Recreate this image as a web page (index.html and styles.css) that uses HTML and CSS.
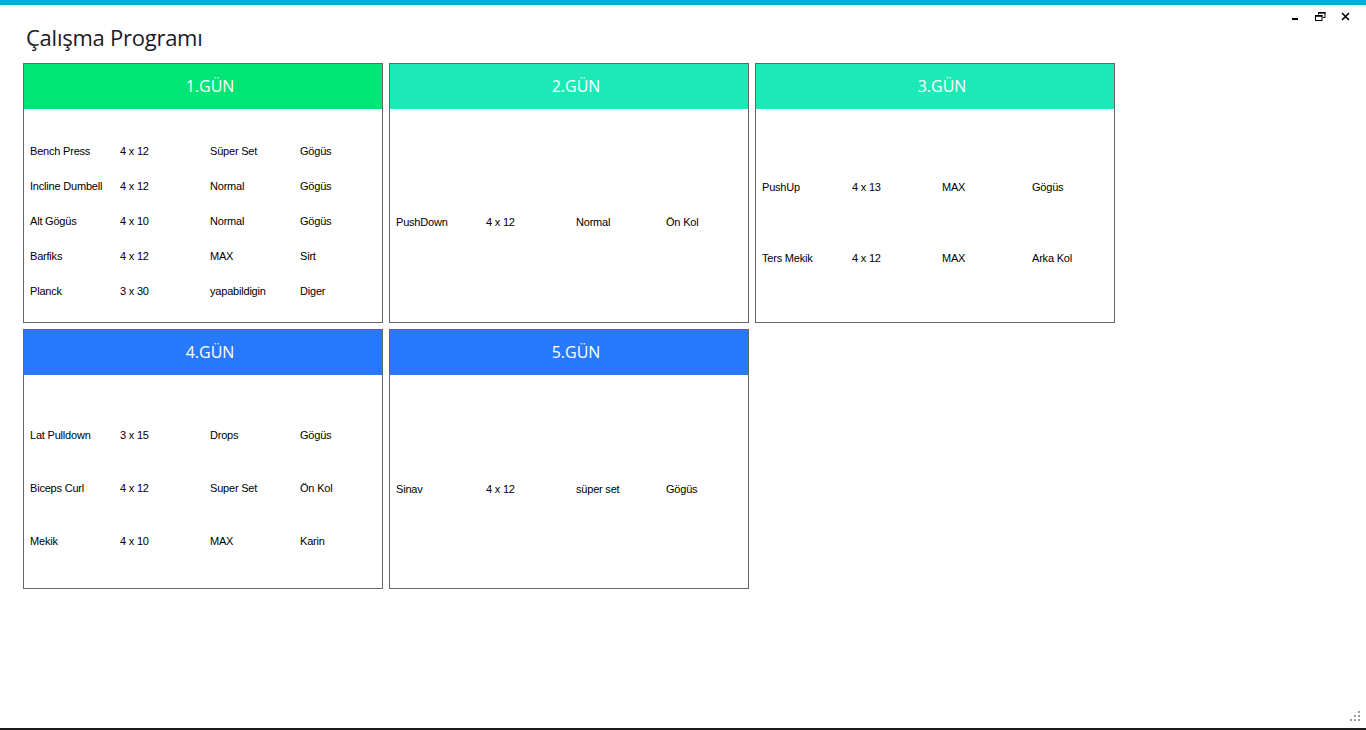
FILE: index.html
```html
<!DOCTYPE html>
<html lang="tr">
<head>
<meta charset="utf-8">
<title>Çalışma Programı</title>
<link rel="stylesheet" href="styles.css">
</head>
<body>
<div class="topbar"></div>
<header class="titlebar">
  <h1 class="title">Çalışma Programı</h1>
  <div class="controls">
    <svg width="60" height="10" viewBox="0 0 60 10">
      <rect x="0" y="6" width="6" height="2" fill="#000"/>
      <path d="M26.5 2.5V0.5h6.5v5h-2" fill="none" stroke="#000" stroke-width="1"/>
      <rect x="26" y="0" width="7.5" height="1.6" fill="#000"/>
      <rect x="23.5" y="3.5" width="6.5" height="5" fill="#fff" stroke="#000" stroke-width="1"/>
      <rect x="23" y="3" width="7.5" height="1.8" fill="#000"/>
      <path d="M50 1L57 8M57 1L50 8" stroke="#000" stroke-width="1.6"/>
    </svg>
  </div>
</header>
<main class="grid">
  <section class="card">
    <div class="card-head head-green">1.GÜN</div>
    <div class="card-body rows-35 body-up">
      <div class="row"><span>Bench Press</span><span>4 x 12</span><span>Süper Set</span><span>Gögüs</span></div>
      <div class="row"><span>Incline Dumbell</span><span>4 x 12</span><span>Normal</span><span>Gögüs</span></div>
      <div class="row"><span>Alt Gögüs</span><span>4 x 10</span><span>Normal</span><span>Gögüs</span></div>
      <div class="row"><span>Barfiks</span><span>4 x 12</span><span>MAX</span><span>Sirt</span></div>
      <div class="row"><span>Planck</span><span>3 x 30</span><span>yapabildigin</span><span>Diger</span></div>
    </div>
  </section>
  <section class="card">
    <div class="card-head head-teal">2.GÜN</div>
    <div class="card-body rows-35">
      <div class="row"><span>PushDown</span><span>4 x 12</span><span>Normal</span><span>Ön Kol</span></div>
    </div>
  </section>
  <section class="card">
    <div class="card-head head-teal">3.GÜN</div>
    <div class="card-body rows-71 body-down">
      <div class="row"><span>PushUp</span><span>4 x 13</span><span>MAX</span><span>Gögüs</span></div>
      <div class="row"><span>Ters Mekik</span><span>4 x 12</span><span>MAX</span><span>Arka Kol</span></div>
    </div>
  </section>
  <section class="card">
    <div class="card-head head-blue">4.GÜN</div>
    <div class="card-body rows-53">
      <div class="row"><span>Lat Pulldown</span><span>3 x 15</span><span>Drops</span><span>Gögüs</span></div>
      <div class="row"><span>Biceps Curl</span><span>4 x 12</span><span>Super Set</span><span>Ön Kol</span></div>
      <div class="row"><span>Mekik</span><span>4 x 10</span><span>MAX</span><span>Karin</span></div>
    </div>
  </section>
  <section class="card">
    <div class="card-head head-blue">5.GÜN</div>
    <div class="card-body rows-35 body-down">
      <div class="row"><span>Sinav</span><span>4 x 12</span><span>süper set</span><span>Gögüs</span></div>
    </div>
  </section>
</main>
<div class="spacer"></div>
<div class="bottombar"></div>
<svg class="grip" width="12" height="12" viewBox="0 0 12 12">
  <rect x="8" y="0" width="2" height="2" fill="#9a9a9a"/>
  <rect x="4" y="4" width="2" height="2" fill="#9a9a9a"/>
  <rect x="8" y="4" width="2" height="2" fill="#9a9a9a"/>
  <rect x="0" y="8" width="2" height="2" fill="#9a9a9a"/>
  <rect x="4" y="8" width="2" height="2" fill="#9a9a9a"/>
  <rect x="8" y="8" width="2" height="2" fill="#9a9a9a"/>
</svg>
</body>
</html>
```
FILE: styles.css
```css
* { box-sizing: border-box; }
html, body { margin: 0; padding: 0; }
body {
  height: 730px;
  display: flex;
  flex-direction: column;
  background: #fff;
  font-family: "Liberation Sans", Arial, sans-serif;
  color: #000;
  position: relative;
  overflow: hidden;
}
.topbar { height: 5px; background: #00acd9; flex: none; }
.titlebar {
  height: 58px;
  display: flex;
  justify-content: space-between;
  align-items: flex-start;
  flex: none;
}
.title {
  margin: 17px 0 0 26px;
  font-family: "Open Sans", "Noto Sans", sans-serif;
  font-weight: 400;
  font-size: 22px;
  line-height: 30px;
  color: #1a1a2a;
  letter-spacing: -0.25px;
}
.controls { margin: 7px 14px 0 0; display: flex; }
.controls svg { display: block; }
.grid {
  display: grid;
  grid-template-columns: repeat(3, 360px);
  grid-auto-rows: 260px;
  gap: 6px;
  padding-left: 23px;
  flex: none;
}
.card {
  border: 1px solid #666;
  display: flex;
  flex-direction: column;
  background: #fff;
}
.card-head {
  height: 45px;
  flex: none;
  display: flex;
  align-items: center;
  justify-content: center;
  color: #fff;
  font-family: "Open Sans", "Noto Sans", sans-serif;
  font-size: 16px;
  padding-left: 14px;
  padding-bottom: 2px;
}
.head-green { background: #00e676; }
.head-teal { background: #1de9b6; }
.head-blue { background: #2979ff; }
.card-body {
  flex: 1;
  display: flex;
  flex-direction: column;
  justify-content: center;
  padding-top: 12px;
  padding-left: 6px;
  font-size: 11px;
  letter-spacing: -0.2px;
}
.card-body.body-up { padding-top: 10px; }
.card-body.body-down { padding-top: 14px; }
.row {
  display: grid;
  grid-template-columns: repeat(4, 90px);
  align-items: center;
  white-space: nowrap;
}
.rows-35 .row { height: 35px; }
.rows-53 .row { height: 53px; }
.rows-71 .row { height: 71px; }
.spacer { flex: 1; }
.bottombar { height: 2px; background: #1a1a1a; flex: none; }
.grip { position: absolute; right: 4px; bottom: 7px; display: block; }
```
